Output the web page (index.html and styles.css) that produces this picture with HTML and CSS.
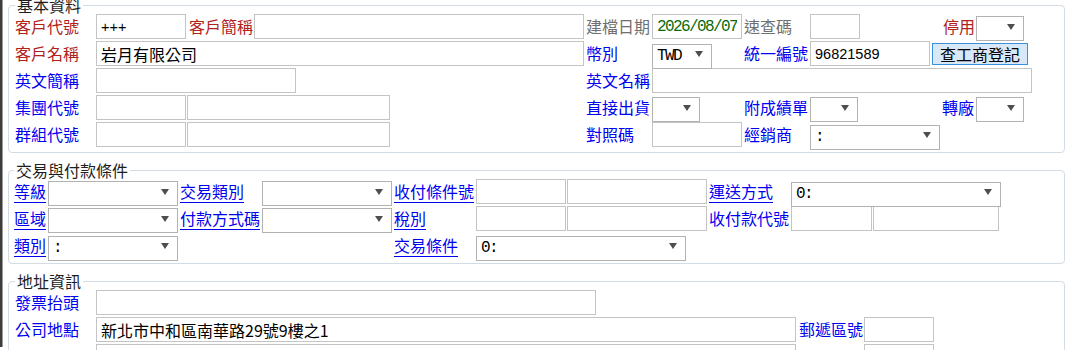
FILE: index.html
```html
<!DOCTYPE html>
<html lang="zh-Hant">
  <head>
    <meta charset="UTF-8" />
    <title>客戶資料</title>
    <link rel="stylesheet" href="styles.css">
  </head>
  <body>
    <div class="window">
      <fieldset class="group first">
        <legend>基本資料</legend>
        <div class="row">
          <span class="lbl red w81">客戶代號</span>
          <input class="txt w90 num" value="+++" />
          <span class="lbl red ml3 w65">客戶簡稱</span>
          <input class="txt w330" />
          <span class="lbl gray ml2 w66">建檔日期</span>
          <input class="txt w90 date" value="2026/08/07" />
          <span class="lbl gray ml2 w66">速查碼</span>
          <input class="txt w50" />
          <span class="lbl red ml83 w33">停用</span>
          <span class="sel w48"><select></select></span>
        </div>
        <div class="row">
          <span class="lbl red w81">客戶名稱</span>
          <input class="txt w488" value="岩月有限公司" />
          <span class="lbl blue ml2 w66">幣別</span>
          <span class="sel w60"><select class="mono"><option>TWD</option></select></span>
          <span class="lbl blue ml32 w66">統一編號</span>
          <input class="txt w120 num" value="96821589" />
          <button type="button" class="btn ml2">查工商登記</button>
        </div>
        <div class="row">
          <span class="lbl blue w81">英文簡稱</span>
          <input class="txt w200" />
          <span class="lbl blue ml290 w66">英文名稱</span>
          <input class="txt w380" />
        </div>
        <div class="row">
          <span class="lbl blue w81">集團代號</span>
          <input class="txt w90" />
          <input class="txt ml1 w203" />
          <span class="lbl blue ml196 w66">直接出貨</span>
          <span class="sel w48"><select></select></span>
          <span class="lbl blue ml44 w66">附成績單</span>
          <span class="sel w48"><select></select></span>
          <span class="lbl blue ml84 w34">轉廠</span>
          <span class="sel w48"><select></select></span>
        </div>
        <div class="row">
          <span class="lbl blue w81">群組代號</span>
          <input class="txt w90" />
          <input class="txt ml1 w203" />
          <span class="lbl blue ml196 w66">對照碼</span>
          <input class="txt w90" />
          <span class="lbl blue ml2 w66">經銷商</span>
          <span class="sel w130"><select class="mono"><option>:</option></select></span>
        </div>
      </fieldset>

      <fieldset class="group trade">
        <legend>交易與付款條件</legend>
        <div class="row">
          <span class="lbl w34"><a href="#">等級</a></span>
          <span class="sel w130"><select></select></span>
          <span class="lbl ml2 w82"><a href="#">交易類別</a></span>
          <span class="sel w130"><select></select></span>
          <span class="lbl ml2 w82"><a href="#">收付條件號</a></span>
          <input class="txt w90" />
          <input class="txt ml1 w140" />
          <span class="lbl ml2 w82"><a href="#">運送方式</a></span>
          <span class="sel w210"><select class="mono"><option>0:</option></select></span>
        </div>
        <div class="row">
          <span class="lbl w34"><a href="#">區域</a></span>
          <span class="sel w130"><select></select></span>
          <span class="lbl ml2 w82"><a href="#">付款方式碼</a></span>
          <span class="sel w130"><select></select></span>
          <span class="lbl ml2 w82"><a href="#">稅別</a></span>
          <input class="txt w90" />
          <input class="txt ml1 w140" />
          <span class="lbl blue ml2 w82">收付款代號</span>
          <input class="txt w81" />
          <input class="txt ml1 w126" />
        </div>
        <div class="row">
          <span class="lbl w34"><a href="#">類別</a></span>
          <span class="sel w130"><select class="mono"><option>:</option></select></span>
          <span class="lbl ml216 w82"><a href="#">交易條件</a></span>
          <span class="sel w210"><select class="mono"><option>0:</option></select></span>
        </div>
      </fieldset>

      <fieldset class="group">
        <legend>地址資訊</legend>
        <div class="row">
          <span class="lbl blue w81">發票抬頭</span>
          <input class="txt w500" />
        </div>
        <div class="row">
          <span class="lbl blue w81">公司地點</span>
          <input class="txt w700" value="新北市中和區南華路29號9樓之1" />
          <span class="lbl blue ml3 w65">郵遞區號</span>
          <input class="txt w70" />
        </div>
        <div class="row">
          <span class="lbl w81"></span>
          <input class="txt w700" />
          <span class="lbl ml3 w65"></span>
          <input class="txt w70" />
        </div>
      </fieldset>
    </div>
  </body>
</html>
```
FILE: styles.css
```css
html,
body {
  height: 100%;
  overflow: hidden;
}

body {
  margin: 0;
  background: #fff;
  font-family: "Noto Sans CJK TC", "Noto Sans", sans-serif;
  font-size: 16px;
  color: #000;
}

.window {
  height: 100%;
  border-left: 2px solid #3c3c3c;
  box-shadow: inset 1px 0 0 #9a9a9a;
  padding-left: 6px;
}

.group {
  margin: 0 5px 9px 0;
  padding: 1px 0 5px 6px;
  border: 1px solid #d3dce5;
  border-radius: 4px;
  min-width: 0;
}

.group.first {
  margin-top: -3px;
}

.group.trade {
  padding-left: 5px;
}

legend {
  padding: 0 2px;
  line-height: 16px;
  color: #1e1e1e;
}

.row {
  display: flex;
  align-items: center;
  height: 25px;
  margin-bottom: 2px;
}

.row:last-child {
  margin-bottom: 0;
}

.lbl {
  flex: none;
  line-height: 25px;
  white-space: nowrap;
}

.red { color: #b1221b; }
.blue { color: #0000f0; }
.gray { color: #707070; }

.lbl a {
  color: #0000f0;
  text-decoration: underline;
  text-underline-offset: 4px;
}

.txt {
  flex: none;
  box-sizing: border-box;
  height: 25px;
  margin: 0;
  padding: 0 4px;
  border: 1px solid #c4c4c4;
  font-family: "Noto Sans CJK TC", sans-serif;
  font-size: 16px;
  color: #000;
  background: #fff;
  outline: none;
}

.num {
  font-family: "Liberation Sans", sans-serif;
  font-size: 14.5px;
}

.date,
.mono {
  font-family: "Liberation Mono", monospace;
  font-size: 16px;
  letter-spacing: -1.6px;
}

.date {
  color: #0b6b0b;
}

.sel {
  flex: none;
  position: relative;
  height: 25px;
}

.sel select {
  box-sizing: border-box;
  width: 100%;
  height: 25px;
  margin: 0;
  padding: 0 0 0 4px;
  border: 1px solid #b2b2b2;
  border-radius: 0;
  background: #fff;
  color: #000;
  appearance: none;
  outline: none;
}

.sel::after {
  content: "";
  position: absolute;
  right: 9px;
  top: 10px;
  border-left: 4px solid transparent;
  border-right: 4px solid transparent;
  border-top: 6px solid #4e4e4e;
}

.btn {
  flex: none;
  box-sizing: border-box;
  width: 96px;
  height: 22px;
  padding: 0;
  border: 1px solid #3a90dc;
  background: #d9e8f7;
  font-family: "Noto Sans CJK TC", sans-serif;
  font-size: 16px;
  line-height: 20px;
  color: #000;
}

.ml1 { margin-left: 1px; }
.ml2 { margin-left: 2px; }
.ml3 { margin-left: 3px; }
.ml32 { margin-left: 32px; }
.ml44 { margin-left: 44px; }
.ml83 { margin-left: 83px; }
.ml84 { margin-left: 84px; }
.ml196 { margin-left: 196px; }
.ml216 { margin-left: 216px; }
.ml290 { margin-left: 290px; }

.w33 { width: 33px; }
.w34 { width: 34px; }
.w48 { width: 48px; }
.w50 { width: 50px; }
.w60 { width: 60px; }
.w65 { width: 65px; }
.w66 { width: 66px; }
.w70 { width: 70px; }
.w81 { width: 81px; }
.w82 { width: 82px; }
.w90 { width: 90px; }
.w120 { width: 120px; }
.w126 { width: 126px; }
.w130 { width: 130px; }
.w140 { width: 140px; }
.w200 { width: 200px; }
.w203 { width: 203px; }
.w210 { width: 210px; }
.w330 { width: 330px; }
.w380 { width: 380px; }
.w488 { width: 488px; }
.w500 { width: 500px; }
.w700 { width: 700px; }
```
